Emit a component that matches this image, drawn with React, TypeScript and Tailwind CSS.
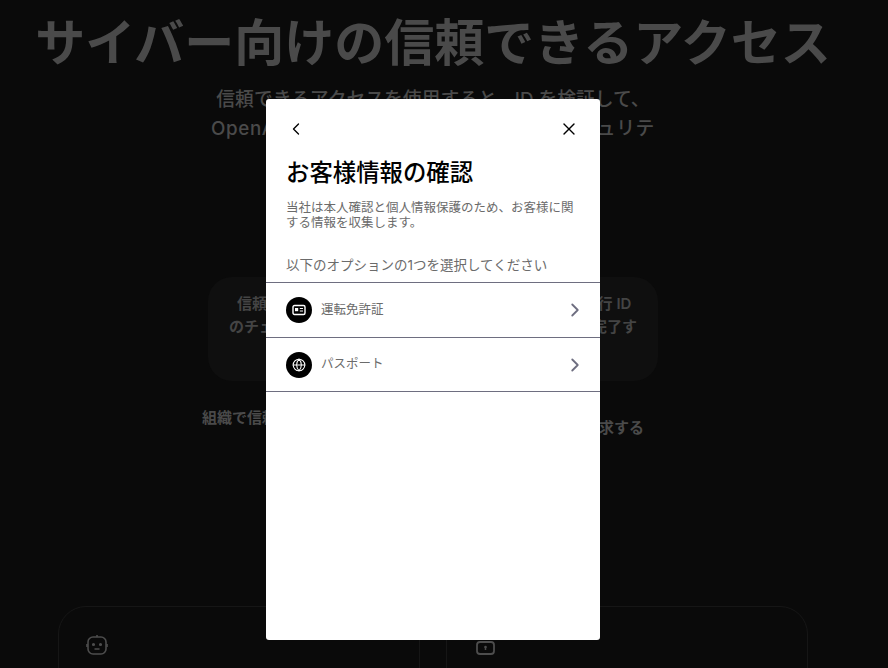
import { ChevronLeft, ChevronRight, Globe, X } from "lucide-react";

const font = { fontFamily: '"Inter", "Noto Sans CJK JP", sans-serif' };

function IdIcon() {
  return (
    <svg width="14" height="12" viewBox="0 0 14 12" fill="none">
      <rect x="1" y="1.5" width="12" height="9" rx="1.5" stroke="white" strokeWidth="1.4" />
      <rect x="3" y="4" width="3.2" height="3.2" fill="white" />
      <path d="M7.8 4.5H11M7.8 7H11" stroke="white" strokeWidth="1.1" />
    </svg>
  );
}

function BotIcon() {
  return (
    <svg width="22" height="22" viewBox="0 0 22 22" fill="none" stroke="#4d4d4d" strokeWidth="1.6">
      <rect x="2" y="3" width="18" height="17" rx="5" />
      <path d="M11 1v2M1 10v3M21 10v3M8.5 15h5" />
      <circle cx="7.5" cy="10.5" r="0.8" fill="#4d4d4d" />
      <circle cx="14.5" cy="10.5" r="0.8" fill="#4d4d4d" />
    </svg>
  );
}

function LockIcon() {
  return (
    <svg width="22" height="22" viewBox="0 0 22 22" fill="none" stroke="#4d4d4d" strokeWidth="1.8">
      <rect x="3" y="8" width="17" height="12" rx="3" />
      <circle cx="11.5" cy="13" r="1.3" fill="#4d4d4d" stroke="none" />
      <path d="M11.5 13v3" strokeWidth="1.5" />
    </svg>
  );
}

const Option = ({ icon, label, h }: { icon: React.ReactNode; label: string; h: string }) => (
  <button className={`flex w-full items-center border-b border-[#6e6e80] pl-5 pr-[14px] text-left ${h}`}>
    <span className="flex h-[26px] w-[26px] shrink-0 items-center justify-center rounded-full bg-black">{icon}</span>
    <span className="ml-[9px] flex-1 text-[12.5px] text-[#6b6b6b]">{label}</span>
    <ChevronRight size={22} strokeWidth={2} className="text-[#6e6e80]" />
  </button>
);

export default function App() {
  return (
    <div style={font} className="relative h-[668px] w-[888px] overflow-hidden bg-[#0a0a0a]">
      {/* page behind the dialog */}
      <div className="flex w-[866px] flex-col items-center pt-[10px]">
        <h1 className="text-[50px] font-bold leading-[66px] whitespace-nowrap text-[#4a4a4a]">
          サイバー向けの信頼できるアクセス
        </h1>
        <p className="mt-[9px] text-center text-[18.8px] leading-[29px] font-medium whitespace-nowrap text-[#4a4a4a]">
          信頼できるアクセスを使用すると、ID を検証して、
          <br />
          <span className="tracking-[0.6px]">OpenAI の最も高度なモデルをサイバーセキュリテ</span>
        </p>

        <div className="mt-[134px] flex h-[104px] w-[450px] justify-between rounded-3xl bg-[#0f0f0f] px-[21px] pt-[15px] text-[15px] leading-[23px] font-semibold text-[#444444]">
          <p className="w-[150px] text-center">
            信頼できるアクセス
            <br />
            のチェックを完了する
          </p>
          <p className="w-[150px] text-center">
            または政府の発行 ID
            <br />
            で本人の確認を完了す
          </p>
        </div>

        <div className="mt-[27px] mr-[20px] flex w-[442px] items-start justify-between text-[15px] leading-5 font-semibold text-[#4a4a4a]">
          <span>組織で信頼</span>
          <span className="mt-[10px]">要求する</span>
        </div>

        <div className="mt-[168px] flex w-[750px] justify-between">
          <div className="h-[120px] w-[362px] rounded-[28px] border border-[#161616] pl-[27px] pt-[27px]">
            <BotIcon />
          </div>
          <div className="h-[120px] w-[362px] rounded-[28px] border border-[#161616] pl-[27px] pt-[27px]">
            <LockIcon />
          </div>
        </div>
      </div>

      {/* dialog */}
      <div className="absolute left-[266px] top-[99px] h-[541px] w-[334px] rounded-[3px] bg-white">
        <div className="flex items-center justify-between pl-5 pr-[21px] pt-5">
          <ChevronLeft size={20} strokeWidth={1.6} className="text-black" />
          <X size={20} strokeWidth={1.6} className="text-black" />
        </div>
        <h2 className="mt-[17px] pl-5 text-[23.4px] leading-[33px] font-medium text-black">お客様情報の確認</h2>
        <p className="mt-[11px] px-5 text-[12.5px] leading-[15px] text-[#6b6b6b]">
          当社は本人確認と個人情報保護のため、お客様に関する情報を収集します。
        </p>
        <p className="mt-[25px] pl-5 text-[13.5px] leading-[20px] text-[#6b6b6b]">以下のオプションの1つを選択してください</p>
        <div className="mt-[7px] border-t border-[#6e6e80]">
          <Option h="h-[55px]" icon={<IdIcon />} label="運転免許証" />
          <Option h="h-[54px]" icon={<Globe size={14} color="white" strokeWidth={1.8} />} label="パスポート" />
        </div>
      </div>
    </div>
  );
}
